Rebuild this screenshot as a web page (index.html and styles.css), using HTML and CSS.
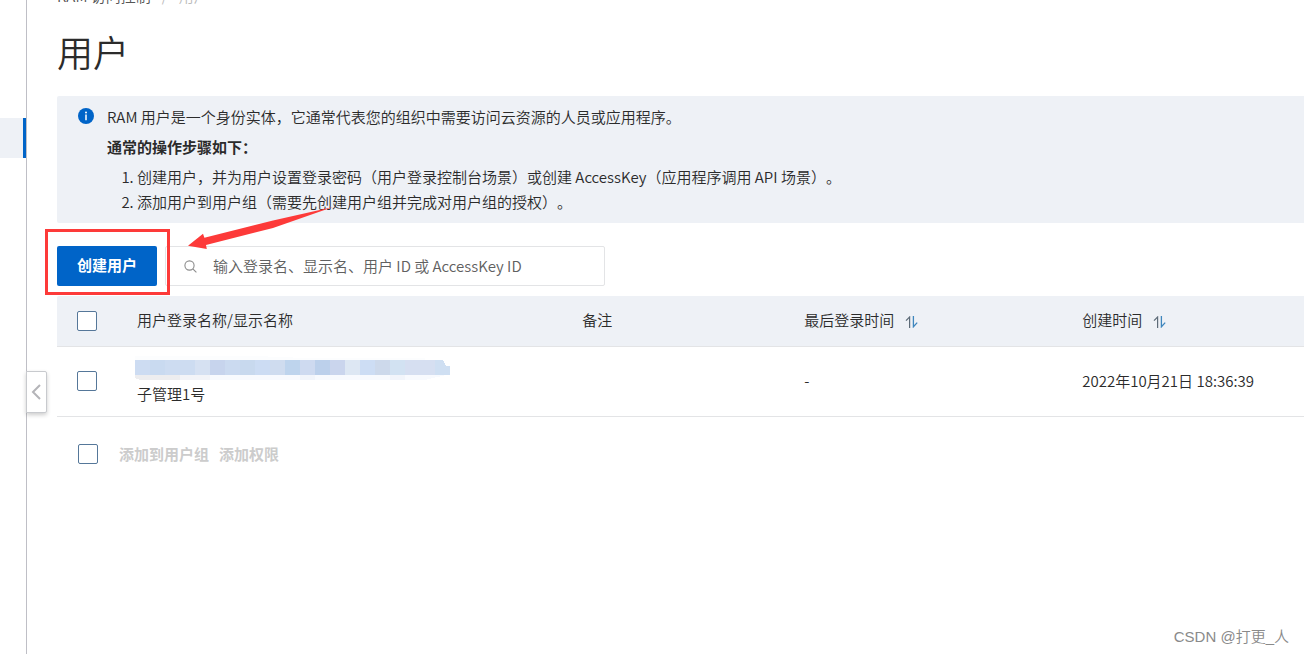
FILE: index.html
```html
<!DOCTYPE html>
<html lang="zh-CN">
<head>
<meta charset="utf-8">
<meta name="viewport" content="width=device-width, initial-scale=1">
<title>用户</title>
<link rel="stylesheet" href="styles.css">
</head>
<body>
<div class="layout">
  <aside class="sidebar">
    <div class="sidebar-active"></div>
    <button class="collapse" type="button" aria-label="收起">
      <svg width="10" height="16" viewBox="0 0 10 16"><path d="M9 1 2 8l7 7" fill="none" stroke="#b4b4b8" stroke-width="2"/></svg>
    </button>
  </aside>
  <main class="content">
    <nav class="breadcrumb"><a href="#">RAM 访问控制</a><span class="slash">/</span><span class="current">用户</span></nav>
    <h1 class="title">用户</h1>

    <section class="notice">
      <svg class="notice-icon" width="16" height="16" viewBox="0 0 16 16"><circle cx="8" cy="8" r="8" fill="#0064c8"/><circle cx="8" cy="4.5" r="1" fill="#fff"/><path d="M8 6.6v5.6" stroke="#fff" stroke-width="1.5"/></svg>
      <div class="notice-body">
        <p>RAM 用户是一个身份实体，它通常代表您的组织中需要访问云资源的人员或应用程序。</p>
        <p class="strong">通常的操作步骤如下：</p>
        <ol class="steps">
          <li>创建用户，并为用户设置登录密码（用户登录控制台场景）或创建 AccessKey（应用程序调用 API 场景）。</li>
          <li>添加用户到用户组（需要先创建用户组并完成对用户组的授权）。</li>
        </ol>
      </div>
    </section>

    <div class="toolbar">
      <button class="primary" type="button">创建用户</button>
      <label class="search">
        <svg width="13" height="13" viewBox="0 0 13 13" fill="none" stroke="#8c8c8c" stroke-width="1.1"><circle cx="5.5" cy="5.5" r="4.6"/><path d="m8.8 8.8 3.6 3.6"/></svg>
        <input type="text" aria-label="搜索用户" placeholder="输入登录名、显示名、用户 ID 或 AccessKey ID">
      </label>
      <div class="highlight"></div>
      <svg class="arrow" width="146" height="44" viewBox="0 0 146 44"><path d="M0 39.7 15 27.7l1.4 4L85 14.5 145 1 85 22 18 39l.8 4Z" fill="#fd3a39"/></svg>
    </div>

    <table class="users">
      <colgroup><col class="c-check"><col class="c-name"><col class="c-note"><col class="c-login"><col></colgroup>
      <thead>
        <tr>
          <th><input class="check" type="checkbox" aria-label="全选"></th>
          <th>用户登录名称/显示名称</th>
          <th>备注</th>
          <th><span class="sortable">最后登录时间<button class="sort" type="button" aria-label="按最后登录时间排序"><svg width="14" height="12" viewBox="0 0 14 12"><path d="M1 4.6 4.6 1v11" fill="none" stroke="#5d6b78" stroke-width="1.2"/><path d="M8.4 0v10.8L12.2 6.6" fill="none" stroke="#3e86bd" stroke-width="1.3"/></svg></button></span></th>
          <th><span class="sortable">创建时间<button class="sort" type="button" aria-label="按创建时间排序"><svg width="14" height="12" viewBox="0 0 14 12"><path d="M1 4.6 4.6 1v11" fill="none" stroke="#5d6b78" stroke-width="1.2"/><path d="M8.4 0v10.8L12.2 6.6" fill="none" stroke="#3e86bd" stroke-width="1.3"/></svg></button></span></th>
        </tr>
      </thead>
      <tbody>
        <tr>
          <td><input class="check" type="checkbox" aria-label="选择 子管理1号"></td>
          <td class="name">
            <svg class="mosaic" width="316" height="24" viewBox="0 0 316 24" shape-rendering="crispEdges">
              <path d="M-2 0H120L170 2H290V4H0Z" fill="#fcfdfe"/>
              <path d="M0 18H45V24H5L0 22Z" fill="#ededef"/><path d="M45 18H75V24H45Z" fill="#f3f4f8"/>
              <path d="M75 18H315L290 24 165 24H75Z" fill="#f8fafe"/><path d="M165 18h15v6h-15zM255 18h15v6h-15z" fill="#f2f5fb"/>
              <g>
                <path d="M0 4h15v15H0z" fill="#cddcf2"/><path d="M15 4h15v15H15z" fill="#c9daf0"/><path d="M30 4h30v15H30z" fill="#cddcf1"/>
                <path d="M60 4h15v15H60z" fill="#d6e1f2"/><path d="M75 4h15v15H75z" fill="#c7d4ed"/><path d="M90 4h15v15H90z" fill="#cbdaf0"/>
                <path d="M105 4h15v15h-15z" fill="#c8d9ee"/><path d="M120 4h15v15h-15z" fill="#ccdcf3"/><path d="M135 4h15v15h-15z" fill="#cfdcef"/>
                <path d="M150 4h15v15h-15z" fill="#bed4ed"/><path d="M165 4h15v15h-15z" fill="#cedaf0"/><path d="M180 4h15v15h-15z" fill="#bcd0eb"/>
                <path d="M195 4h15v15h-15z" fill="#cad5ed"/><path d="M210 4h15v15h-15z" fill="#dde7f3"/><path d="M225 4h15v15h-15z" fill="#cdddf4"/>
                <path d="M240 4h15v15h-15z" fill="#cdd9eb"/><path d="M255 4h15v15h-15z" fill="#d2e2f2"/><path d="M270 4h30v15h-30z" fill="#d6dff1"/>
                <path d="M300 4h8l3 6h4v9h-15z" fill="#cfdff2"/>
              </g>
            </svg>
            <span>子管理1号</span>
          </td>
          <td></td>
          <td>-</td>
          <td>2022年10月21日 18:36:39</td>
        </tr>
      </tbody>
    </table>

    <div class="bulk">
      <input class="check" type="checkbox" aria-label="全选">
      <div class="bulk-actions">
        <button type="button" disabled>添加到用户组</button>
        <button type="button" disabled>添加权限</button>
      </div>
    </div>
    <footer class="watermark">CSDN @打更_人</footer>
  </main>
</div>
</body>
</html>
```
FILE: styles.css
```css
* { box-sizing: border-box; }

body {
  margin: 0;
  background: #fff;
  color: #2b2b2b;
  font: 15px/24px "Noto Sans CJK SC", "Noto Sans", sans-serif;
  font-weight: 350;
  text-spacing-trim: space-all;
  overflow: hidden;
}

button, input { font: inherit; color: inherit; }
p, h1, ol { margin: 0; padding: 0; }

.layout { display: flex; min-height: 100vh; }

.sidebar {
  position: relative;
  flex: none;
  width: 27px;
  padding-top: 118px;
  border-right: 1px solid #bfbfc6;
}
.sidebar-active {
  height: 40px;
  background: #eef1f6;
  border-right: 3px solid #0064c8;
}
.collapse {
  position: absolute;
  top: 371px;
  left: 26px;
  display: grid;
  place-items: center;
  width: 21px;
  height: 42px;
  padding: 0 2px 0 0;
  background: #fff;
  border: 1px solid #c8cace;
  border-radius: 0 2px 2px 0;
  box-shadow: 0 2px 4px rgba(0, 0, 0, .2);
}

.content {
  flex: 1;
  min-width: 0;
  display: flex;
  flex-direction: column;
  padding-left: 30px;
}

.breadcrumb {
  display: flex;
  gap: 11px;
  height: 24px;
  margin-top: -16px;
}
.breadcrumb a { color: #555; text-decoration: none; }
.slash, .current { color: #bbb; }

.title {
  margin: 19px 0 21px;
  font-size: 36px;
  line-height: 48px;
  font-weight: 350;
}

.notice {
  display: flex;
  gap: 13px;
  padding: 8px 21px 9px;
  background: #eef1f6;
  border-radius: 2px 0 0 2px;
}
.notice-icon { flex: none; margin-top: 4px; }
.notice-body p { line-height: 25px; margin-bottom: 5px; }
.notice-body .strong { font-weight: 700; }
.steps { padding-left: 30px; line-height: 25px; }

.toolbar {
  position: relative;
  display: flex;
  gap: 8px;
  margin: 23px 0 10px;
}
.primary {
  width: 100px;
  height: 40px;
  padding: 0 0 2px;
  border: 0;
  border-radius: 2px;
  background: #0064c8;
  color: #fff;
  font-weight: 700;
}
.search {
  display: flex;
  align-items: center;
  gap: 16px;
  width: 440px;
  height: 40px;
  padding: 0 18px;
  border: 1px solid #e3e4e6;
  border-radius: 2px;
}
.search svg { flex: none; }
.search input {
  flex: 1;
  min-width: 0;
  padding: 0;
  border: 0;
  outline: 0;
  background: none;
}
.search input::placeholder { color: #606060; opacity: 1; }
.highlight {
  position: absolute;
  top: -17px;
  left: -12px;
  width: 125px;
  height: 66px;
  border: 3px solid #fd3a39;
}
.arrow { position: absolute; top: -40px; left: 131px; }

.users {
  width: 100%;
  table-layout: fixed;
  border-collapse: separate;
  border-spacing: 0;
}
.c-check { width: 60px; }
.c-name { width: 35.7%; }
.c-note { width: 17.8%; }
.c-login { width: 22.3%; }
.users th, .users td {
  padding: 0 20px 2px;
  border-bottom: 1px solid #e3e4e6;
  text-align: left;
  vertical-align: middle;
  white-space: nowrap;
}
.users th { height: 51px; background: #eef1f6; font-weight: 350; }
.users td { height: 70px; }
.users th:first-child { padding-bottom: 0; border-top-left-radius: 2px; }
.users .name { padding-bottom: 0; }
.name span { display: block; }
.mosaic { display: block; margin: -2px 0 2px -2px; }
.sortable { display: inline-flex; align-items: center; gap: 11px; }
.sort { display: flex; padding: 4px 0 0; border: 0; background: none; }

.check {
  appearance: none;
  display: block;
  flex: none;
  width: 20px;
  height: 20px;
  margin: 0;
  border: 1px solid #557799;
  border-radius: 2px;
  background: #fff;
}

.bulk {
  display: flex;
  align-items: center;
  gap: 21px;
  padding: 25px 21px;
}
.bulk-actions { display: flex; gap: 10px; }
.bulk-actions button {
  padding: 0;
  border: 0;
  background: none;
  color: #ccc;
  font-weight: 700;
}

.watermark {
  margin-top: auto;
  padding: 0 15px 5px;
  color: #8a8a8a;
  font-family: "Liberation Sans", "Noto Sans CJK SC", sans-serif;
  text-align: right;
}
```
